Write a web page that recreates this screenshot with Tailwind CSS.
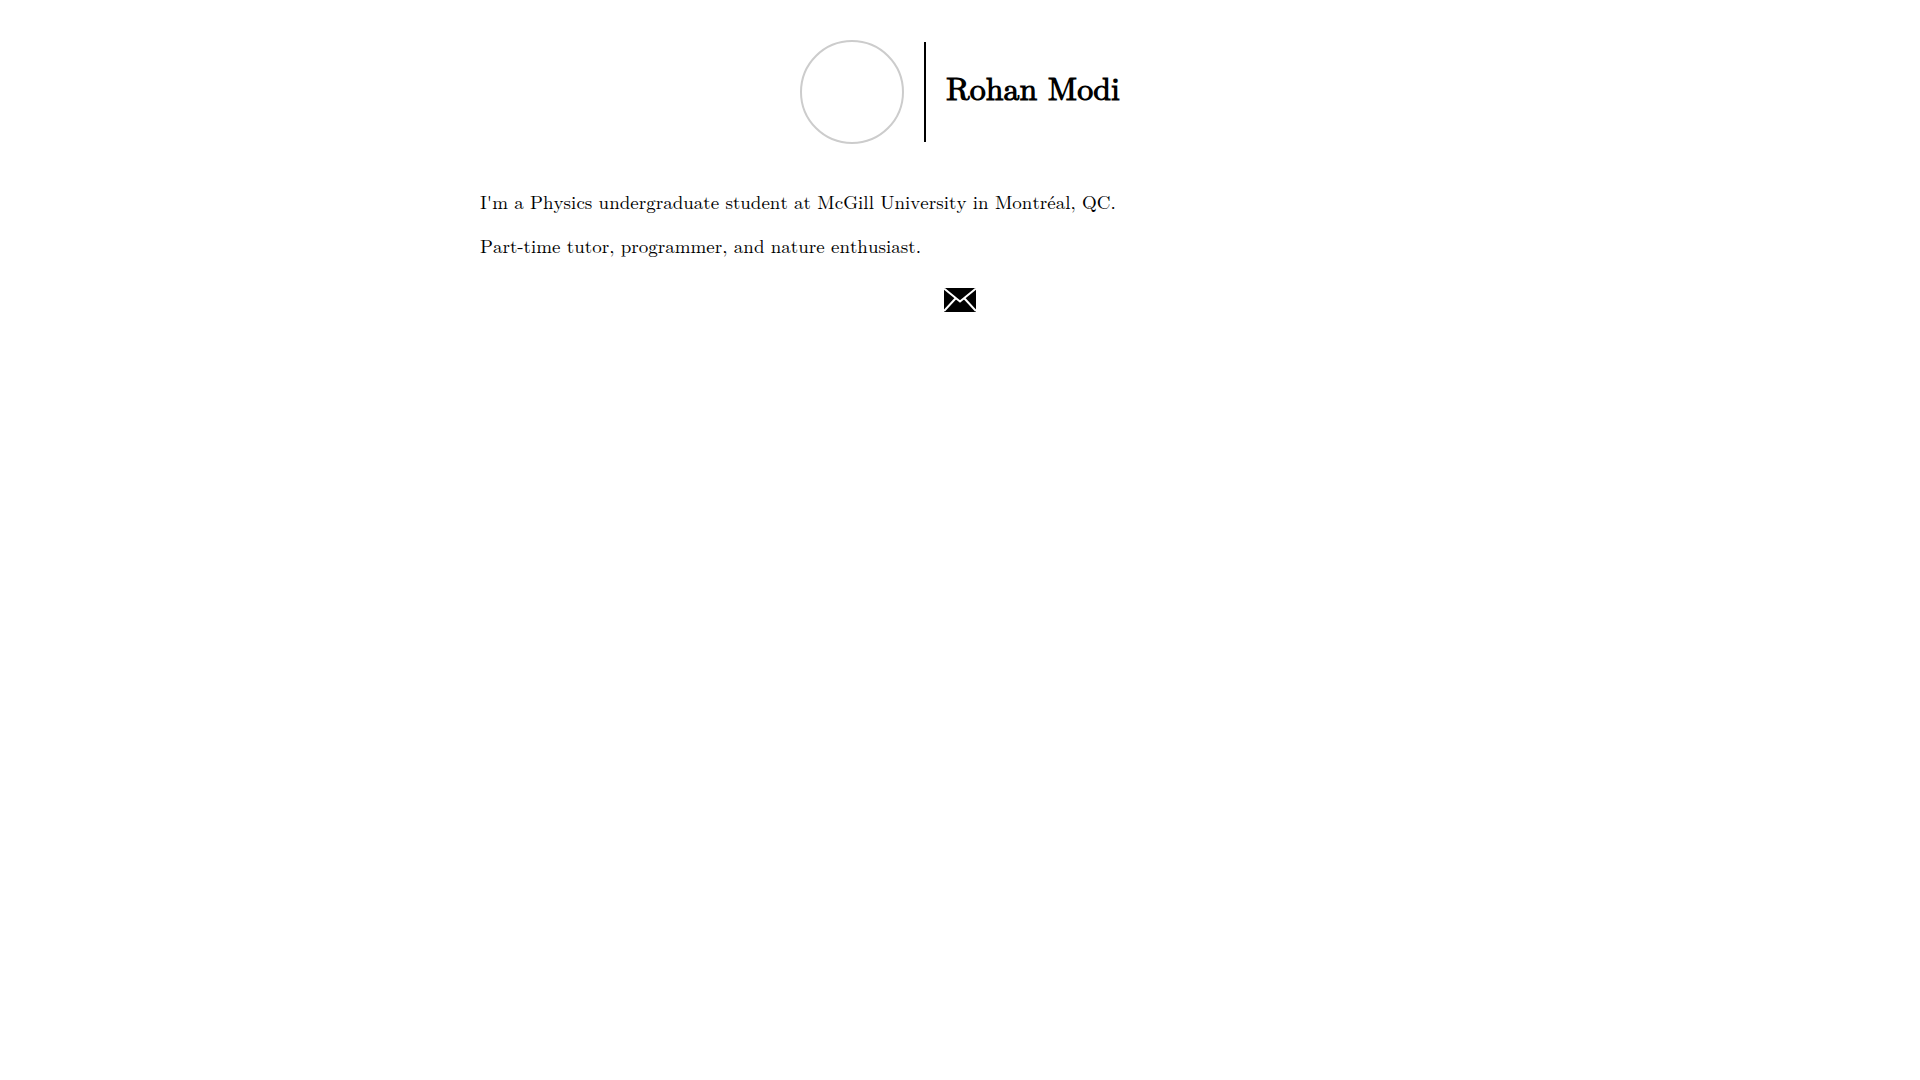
<!DOCTYPE html>
<html lang="en">
<head>
    <meta charset="UTF-8">
    <meta name="viewport" content="width=device-width, initial-scale=1.0">
    <title>Rohan Modi</title>
    <script src="https://cdn.jsdelivr.net/npm/@tailwindcss/browser@4"></script>
</head>
<body class="bg-white text-black font-['Latin_Modern_Math','Latin_Modern_Roman','Liberation_Serif',serif]">
    <div class="w-1/2 mx-auto pt-10">
        <!-- Header -->
        <header class="flex items-center justify-center gap-5">
            <div class="size-[104px] shrink-0 rounded-full border-2 border-[#ccc]"></div>
            <div class="h-[100px] w-0.5 shrink-0 bg-black"></div>
            <h1 class="text-[32px] leading-10 font-bold pb-1">Rohan Modi</h1>
        </header>

        <!-- About -->
        <main class="mt-12 space-y-5 text-[19px] leading-6">
            <p>I'm a Physics undergraduate student at McGill University in Montréal, QC.</p>
            <p>Part-time tutor, programmer, and nature enthusiast.</p>
        </main>

        <!-- Contact -->
        <footer class="mt-7 flex justify-center">
            <a href="mailto:" aria-label="Email">
                <svg class="block w-8 h-6" viewBox="0 0 32 24">
                    <path d="M0 0h32v24H0z" fill="#000"/>
                    <path d="M0 0.5L16 13.5L32 0.5M11.5 10.5L0 23M20.5 10.5L32 23" fill="none" stroke="#fff" stroke-width="2"/>
                </svg>
            </a>
        </footer>
    </div>
</body>
</html>
